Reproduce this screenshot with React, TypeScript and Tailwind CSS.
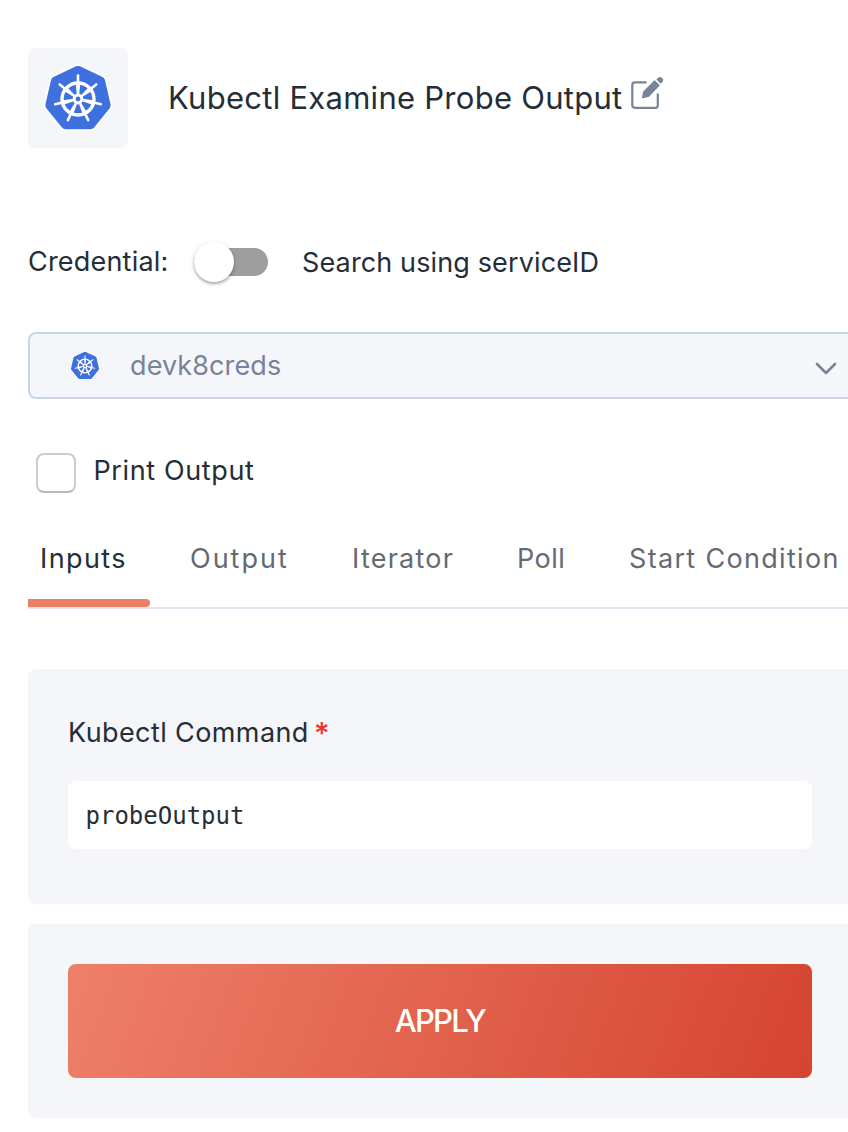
const SPOKES = [0, 1, 2, 3, 4, 5, 6].map((i) => (i * 360) / 7);

const HEPTAGON = SPOKES.map((deg) => {
  const a = (deg * Math.PI) / 180;
  return `${(28.8 * Math.sin(a)).toFixed(2)},${(-28.5 * Math.cos(a)).toFixed(2)}`;
}).join(" ");

function KubernetesLogo({ className }: { className: string }) {
  return (
    <svg viewBox="-35 -35 70 70" className={className} aria-hidden="true">
      <polygon points={HEPTAGON} fill="#fff" stroke="#fff" strokeWidth="13" strokeLinejoin="round" />
      <polygon points={HEPTAGON} fill="#3f70df" stroke="#3f70df" strokeWidth="9.2" strokeLinejoin="round" />
      <circle r="16" fill="none" stroke="#fff" strokeWidth="3.4" />
      {SPOKES.map((deg) => (
        <g key={deg} transform={`rotate(${deg})`}>
          <path d="M-1.1-4 L-2.3-15.4 H2.3 L1.1-4Z" fill="#fff" />
          <path d="M0-15V-23.4" stroke="#fff" strokeWidth="2.6" strokeLinecap="round" />
        </g>
      ))}
      <circle r="3.9" fill="#3f70df" stroke="#fff" strokeWidth="3" />
    </svg>
  );
}

function EditIcon() {
  return (
    <svg viewBox="0 0 34 34" className="h-[34px] w-[34px]" fill="none" aria-hidden="true">
      <path
        d="M16.6 6.3H4.9a2.6 2.6 0 0 0-2.6 2.6v20.3a2.6 2.6 0 0 0 2.6 2.6h20.3a2.6 2.6 0 0 0 2.6-2.6V17.4"
        stroke="#788397"
        strokeWidth="2.2"
      />
      <path d="M12.6 21.6l1.1-5.8L24.6 4.9l4.5 4.5L18.2 20.5z" fill="#788397" stroke="#788397" strokeWidth="1.2" strokeLinejoin="round" />
      <path d="M26.4 3.4l1.5-1.4a3 3 0 0 1 4.3 0 3 3 0 0 1 0 4.2l-1.5 1.5z" fill="#788397" />
    </svg>
  );
}

export default function App() {
  return (
    <div className="h-[1132px] w-[848px] overflow-hidden bg-white pl-7 pt-12 font-['Inter',sans-serif] text-[27px] font-normal leading-[36px] text-[#252d37]">
      <header className="flex h-[100px] items-center">
        <div className="flex h-[100px] w-[100px] items-center justify-center rounded-lg bg-[#f5f6fa] pt-px">
          <KubernetesLogo className="h-[70px] w-[70px]" />
        </div>
        <h1 className="ml-10 w-[462px] whitespace-nowrap text-[31px] font-normal tracking-[0.27px]">Kubectl Examine Probe Output</h1>
        <div className="-mt-[10px]">
          <EditIcon />
        </div>
      </header>

      <div className="mt-[94px] flex h-10 items-center whitespace-nowrap">
        <span className="w-[166px] tracking-[0.2px]">Credential:</span>
        <div className="flex h-10 w-[74px] items-center">
          <div className="flex h-7 w-[74px] items-center rounded-full bg-[#9e9e9e]">
            <div className="h-10 w-10 shrink-0 rounded-full bg-white shadow-[0_2px_3px_rgba(0,0,0,0.3),0_1px_6px_rgba(0,0,0,0.08)]" />
          </div>
        </div>
        <span className="ml-[34px] mt-0.5 tracking-[0.13px]">Search using serviceID</span>
      </div>

      <div className="mt-[50px] flex h-[67px] items-center rounded-l-lg border-2 border-r-0 border-[#cad5e6] bg-[#f5f6fa] text-[#788397]">
        <KubernetesLogo className="ml-10 mt-px h-[30px] w-[30px]" />
        <span className="ml-[30px] mt-px tracking-[0.1px]">devk8creds</span>
        <svg viewBox="0 0 22 14" className="ml-auto mr-[11px] mt-1.5 h-[14px] w-[22px]" fill="none" aria-hidden="true">
          <path d="M2 2l9 9 9-9" stroke="#788397" strokeWidth="2.6" strokeLinecap="round" strokeLinejoin="round" />
        </svg>
      </div>

      <div className="mt-[54px] flex h-10 pl-2">
        <div className="h-10 w-10 rounded-lg border-2 border-[#cccccc] border-b-[#b8b8b8]" />
        <span className="ml-[17.5px] tracking-[0.62px]">Print Output</span>
      </div>

      <nav className="mt-12 flex h-[68px] whitespace-nowrap border-b-2 border-[#e0e5f2] text-[#646a73]">
        <div className="flex w-[122px] flex-col justify-between text-[#252d37]">
          <span className="ml-3 tracking-[1.4px]">Inputs</span>
          <div className="h-2 rounded-r bg-[#ee7f67]" />
        </div>
        <span className="ml-[40px] w-[162px] tracking-[2px]">Output</span>
        <span className="w-[165px] tracking-[1.25px]">Iterator</span>
        <span className="w-[112px] tracking-[0.5px]">Poll</span>
        <span className="tracking-[1.32px]">Start Condition</span>
      </nav>

      <section className="mt-[60px] h-[235px] rounded-l-lg bg-[#f5f6fa] pl-10 pr-9 pt-[46px]">
        <label className="flex whitespace-nowrap">
          <span className="w-[246px] tracking-[0.4px]">Kubectl Command</span>
          <span className="text-[30px] font-medium text-[#f4302b]">*</span>
        </label>
        <div className="mt-[30px] flex h-[68px] items-center rounded-lg bg-white pl-[17.5px] pt-0.5 font-['DejaVu_Sans_Mono',monospace] text-[24px]">
          probeOutput
        </div>
      </section>

      <section className="mt-5 h-[194px] rounded-l-lg bg-[#f5f6fa] pl-10 pr-9 pt-10">
        <button className="flex h-[114px] w-full items-center justify-center rounded-lg bg-[linear-gradient(110deg,#ee806a_0%,#d54430_100%)] text-[31px] font-medium tracking-[-1.8px] text-white">
          APPLY
        </button>
      </section>
    </div>
  );
}
